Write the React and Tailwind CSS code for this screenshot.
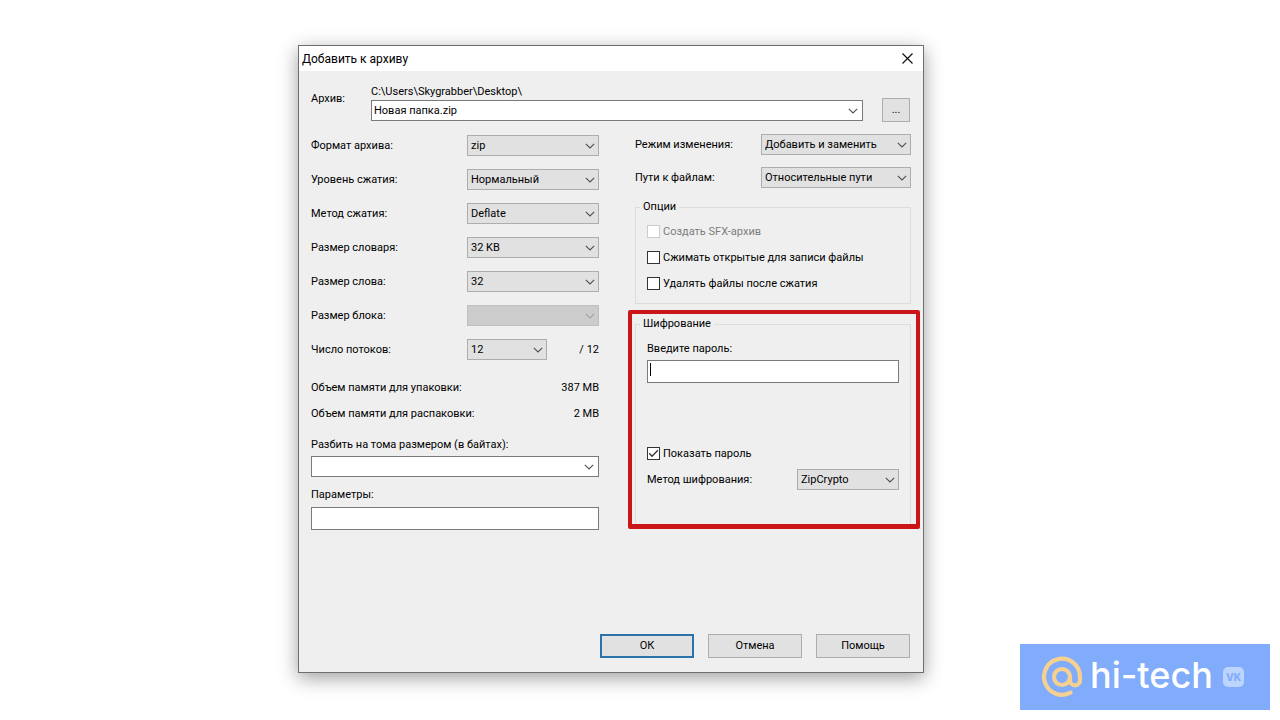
import { useId, useState } from "react";

const Chevron = ({ muted }) => (
  <svg
    width="10"
    height="6"
    viewBox="0 0 10 6"
    fill="none"
    stroke={muted ? "#a3a3a3" : "#505050"}
    strokeWidth="1.1"
    className="pointer-events-none"
    aria-hidden="true"
  >
    <path d="M0.8 0.8 5 5 9.2 0.8" />
  </svg>
);

const Select = ({ id, value, disabled, className }) => (
  <div className={`relative ${className}`}>
    <select
      id={id}
      disabled={disabled}
      defaultValue={value}
      className="block h-[21px] w-full appearance-none border border-[#adadad] bg-[#e1e1e1] pt-px pr-5 pl-[3px] leading-4 text-black outline-none disabled:border-[#bfbfbf] disabled:bg-[#cccccc] disabled:opacity-100"
    >
      <option>{value}</option>
    </select>
    <span className="pointer-events-none absolute inset-y-0 right-1 flex items-center">
      <Chevron muted={disabled} />
    </span>
  </div>
);

const SelectRow = ({ label, value, disabled, width, children }) => {
  const id = useId();
  return (
    <div className="flex items-center">
      <label htmlFor={id} className="flex-1">
        {label}
      </label>
      <Select id={id} value={value} disabled={disabled} className={width} />
      {children}
    </div>
  );
};

const ComboBox = ({ id, value }) => {
  const [text, setText] = useState(value);
  return (
    <div className="flex h-[21px] items-center border border-[#7a7a7a] bg-white pr-1">
      <input
        id={id}
        type="text"
        value={text}
        onChange={(e) => setText(e.target.value)}
        className="h-full min-w-0 flex-1 pl-[2px] leading-4 outline-none"
      />
      <button type="button" aria-label="Открыть список">
        <Chevron />
      </button>
    </div>
  );
};

const CheckBox = ({ label, checked, disabled }) => (
  <label
    className={`flex items-start gap-[3px] ${disabled ? "text-[#7d7d7d]" : ""}`}
  >
    <span className="relative mt-px flex">
      <input
        type="checkbox"
        defaultChecked={checked}
        disabled={disabled}
        className="peer size-[13px] appearance-none border border-[#333333] bg-white disabled:border-[#cccccc]"
      />
      <svg
        viewBox="0 0 13 13"
        fill="none"
        stroke="#333333"
        strokeWidth="1.3"
        className="pointer-events-none absolute inset-0 hidden size-[13px] peer-checked:block"
        aria-hidden="true"
      >
        <path d="M2.2 6.3 5 9.2 10.9 3.2" />
      </svg>
    </span>
    {label}
  </label>
);

const Group = ({ title, children }) => (
  <fieldset className="border border-[#dcdcdc]">
    <legend className="ml-1 px-[3px]">{title}</legend>
    {children}
  </fieldset>
);

const DialogButton = ({ children, primary }) => (
  <button
    type="button"
    className={`h-6 w-[94px] bg-[#e1e1e1] ${
      primary ? "border-2 border-[#2a73ab]" : "border border-[#adadad]"
    }`}
  >
    {children}
  </button>
);

const Logo = () => (
  <div className="fixed right-[10px] bottom-[10px] flex h-[66px] w-[250px] items-center justify-between bg-[#80acfb] pr-[26px] pl-5">
    <div className="flex items-center gap-[6px]">
      <svg
        width="44"
        height="44"
        viewBox="20 11 44 44"
        fill="none"
        stroke="#f5d090"
        strokeWidth="4.2"
        strokeLinecap="round"
        aria-hidden="true"
      >
        <circle cx="42" cy="33" r="8" />
        <path d="M50.5 48.6A18 18 0 1 1 60 33v3.3a5 5 0 0 1-10 0V33" />
      </svg>
      <span className="pb-[5px] font-['Inter',sans-serif] text-[36px] leading-10 font-medium text-white">
        hi-tech
      </span>
    </div>
    <span className="flex h-5 w-[21px] items-center justify-center rounded-[5px] bg-[#bcd5fd] font-['Inter',sans-serif] text-[10px] leading-3 font-extrabold text-[#80acfb]">
      VK
    </span>
  </div>
);

export default function App() {
  return (
    <main className="flex min-h-screen items-start justify-center bg-white pt-[45px] pr-[58px] pb-8 font-['Roboto','Liberation_Sans',sans-serif] text-[11px] leading-4 text-black">
      <section
        role="dialog"
        aria-labelledby="dialog-title"
        className="w-full max-w-[626px] border border-[#6e6e6e] bg-[#efefef] shadow-[0_5px_18px_rgba(0,0,0,0.38)]"
      >
        <header className="flex h-[25px] items-center justify-between bg-white pr-[10px] pl-[3px]">
          <h1 id="dialog-title" className="text-[12px]">
            Добавить к архиву
          </h1>
          <button type="button" aria-label="Закрыть">
            <svg
              width="11"
              height="11"
              viewBox="0 0 11 11"
              stroke="#111111"
              strokeWidth="1.2"
              aria-hidden="true"
            >
              <path d="M0.5 0.5 10.5 10.5M10.5 0.5 0.5 10.5" />
            </svg>
          </button>
        </header>

        <form className="px-3 pt-[13px] pb-[14px]">
          <div className="flex items-end pr-px">
            <label htmlFor="archive" className="w-[60px] self-start pt-[7px]">
              Архив:
            </label>
            <div className="flex-1 pb-px">
              <p>C:\Users\Skygrabber\Desktop\</p>
              <ComboBox id="archive" value="Новая папка.zip" />
            </div>
            <button
              type="button"
              className="ml-[19px] h-6 w-7 border border-[#adadad] bg-[#e1e1e1]"
            >
              ...
            </button>
          </div>

          <div className="mt-3 grid grid-cols-[288fr_276fr] items-start gap-x-9">
            <div className="pt-px">
              <div className="flex flex-col gap-[13px]">
                <SelectRow label="Формат архива:" value="zip" width="w-[132px]" />
                <SelectRow
                  label="Уровень сжатия:"
                  value="Нормальный"
                  width="w-[132px]"
                />
                <SelectRow
                  label="Метод сжатия:"
                  value="Deflate"
                  width="w-[132px]"
                />
                <SelectRow
                  label="Размер словаря:"
                  value="32 KB"
                  width="w-[132px]"
                />
                <SelectRow label="Размер слова:" value="32" width="w-[132px]" />
                <SelectRow
                  label="Размер блока:"
                  value=""
                  width="w-[132px]"
                  disabled
                />
                <SelectRow label="Число потоков:" value="12" width="w-20">
                  <span className="w-[52px] text-right">/ 12</span>
                </SelectRow>
              </div>

              <dl className="mt-5 flex flex-col gap-[10px]">
                <div className="flex justify-between">
                  <dt>Объем памяти для упаковки:</dt>
                  <dd>387 MB</dd>
                </div>
                <div className="flex justify-between">
                  <dt>Объем памяти для распаковки:</dt>
                  <dd>2 MB</dd>
                </div>
              </dl>

              <label htmlFor="volumes" className="mt-[15px] mb-[3px] block">
                Разбить на тома размером (в байтах):
              </label>
              <ComboBox id="volumes" value="" />

              <label htmlFor="params" className="mt-[10px] mb-1 block">
                Параметры:
              </label>
              <input
                id="params"
                type="text"
                className="block h-[23px] w-full border border-[#7a7a7a] bg-white px-[3px] outline-none"
              />
            </div>

            <div>
              <div className="mb-[11px] flex flex-col gap-3">
                <SelectRow
                  label="Режим изменения:"
                  value="Добавить и заменить"
                  width="w-[150px]"
                />
                <SelectRow
                  label="Пути к файлам:"
                  value="Относительные пути"
                  width="w-[150px]"
                />
              </div>

              <Group title="Опции">
                <div className="flex flex-col items-start gap-[10px] px-[11px] pt-[9px] pb-[11px]">
                  <CheckBox label="Создать SFX-архив" disabled />
                  <CheckBox label="Сжимать открытые для записи файлы" />
                  <CheckBox label="Удалять файлы после сжатия" />
                </div>
              </Group>

              <div className="relative mt-3">
                <Group title="Шифрование">
                  <div className="px-[11px] pt-[9px] pb-[35px]">
                    <label htmlFor="password" className="mb-[3px] block">
                      Введите пароль:
                    </label>
                    <div className="relative">
                      <input
                        id="password"
                        type="text"
                        className="block h-[23px] w-full border border-[#7a7a7a] bg-white px-[3px] caret-transparent outline-none"
                      />
                      {/* text cursor */}
                      <span className="absolute top-[3px] left-[3px] h-[13px] w-px bg-black" />
                    </div>
                    <div className="mt-[63px] mb-[7px] flex">
                      <CheckBox label="Показать пароль" checked />
                    </div>
                    <SelectRow
                      label="Метод шифрования:"
                      value="ZipCrypto"
                      width="w-[102px]"
                    />
                  </div>
                </Group>
                {/* highlight around the encryption settings */}
                <div className="pointer-events-none absolute -top-[6px] -right-[9px] -bottom-[3px] -left-[7px] rounded-[2px] border-4 border-b-5 border-[#cb1619]" />
              </div>
            </div>
          </div>

          <div className="mt-[104px] flex justify-end gap-[14px] pr-px">
            <DialogButton primary>ОК</DialogButton>
            <DialogButton>Отмена</DialogButton>
            <DialogButton>Помощь</DialogButton>
          </div>
        </form>
      </section>

      <Logo />
    </main>
  );
}
